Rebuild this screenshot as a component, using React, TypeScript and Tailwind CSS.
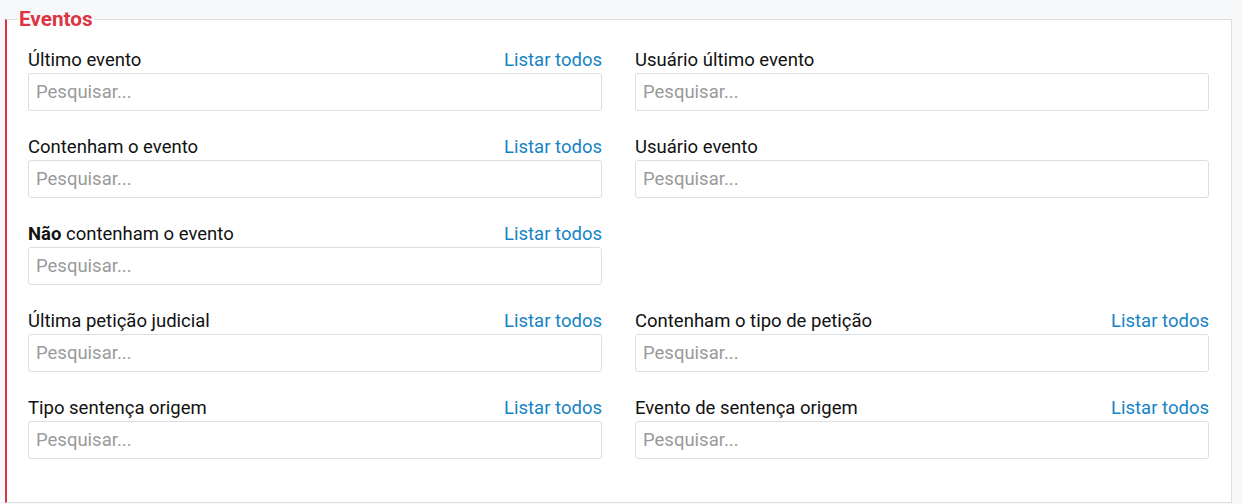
import React from 'react';

interface Field {
  label: React.ReactNode;
  listAll?: boolean;
}

// null marks an empty cell in the grid
const fields: (Field | null)[] = [
  { label: 'Último evento', listAll: true },
  { label: 'Usuário último evento' },
  { label: 'Contenham o evento', listAll: true },
  { label: 'Usuário evento' },
  {
    label: (
      <>
        <b className="font-bold">Não</b> contenham o evento
      </>
    ),
    listAll: true,
  },
  null,
  { label: 'Última petição judicial', listAll: true },
  { label: 'Contenham o tipo de petição', listAll: true },
  { label: 'Tipo sentença origem', listAll: true },
  { label: 'Evento de sentença origem', listAll: true },
];

function SearchField({ field }: { field: Field }) {
  return (
    <div className="mb-[23px]">
      <div className="flex h-[26px] items-start justify-between pt-[1px]">
        <label className="text-[18.5px] leading-6 text-[#111]">{field.label}</label>
        {field.listAll && (
          <a href="#" className="text-[18.5px] leading-6 text-[#1584c5] hover:underline">
            Listar todos
          </a>
        )}
      </div>
      <input
        type="text"
        placeholder="Pesquisar..."
        className="block h-[38px] w-full rounded-[3px] border border-[#dcdfe2] bg-white px-[7px] text-[18.5px] text-[#333] outline-none placeholder:text-[#9a9a9a]"
      />
    </div>
  );
}

export default function App() {
  return (
    <div className="min-h-[504px] bg-[#f7f8fa] pl-[5px] pr-[10px] pt-[7px] font-['Roboto',sans-serif]">
      <fieldset className="m-0 min-w-0 border border-l-2 border-[#dcdfe2] border-l-[#dc3545] bg-white pb-[20px] pl-[21px] pr-[22px] pt-[16px]">
        <legend className="-ml-[10px] px-px text-[20.7px] font-bold leading-6 text-[#dc3545]">
          Eventos
        </legend>

        {/* Filtros de eventos */}
        <div className="grid grid-cols-2 gap-x-[33px]">
          {fields.map((f, i) => (f ? <SearchField key={i} field={f} /> : <div key={i} />))}
        </div>
      </fieldset>
    </div>
  );
}
